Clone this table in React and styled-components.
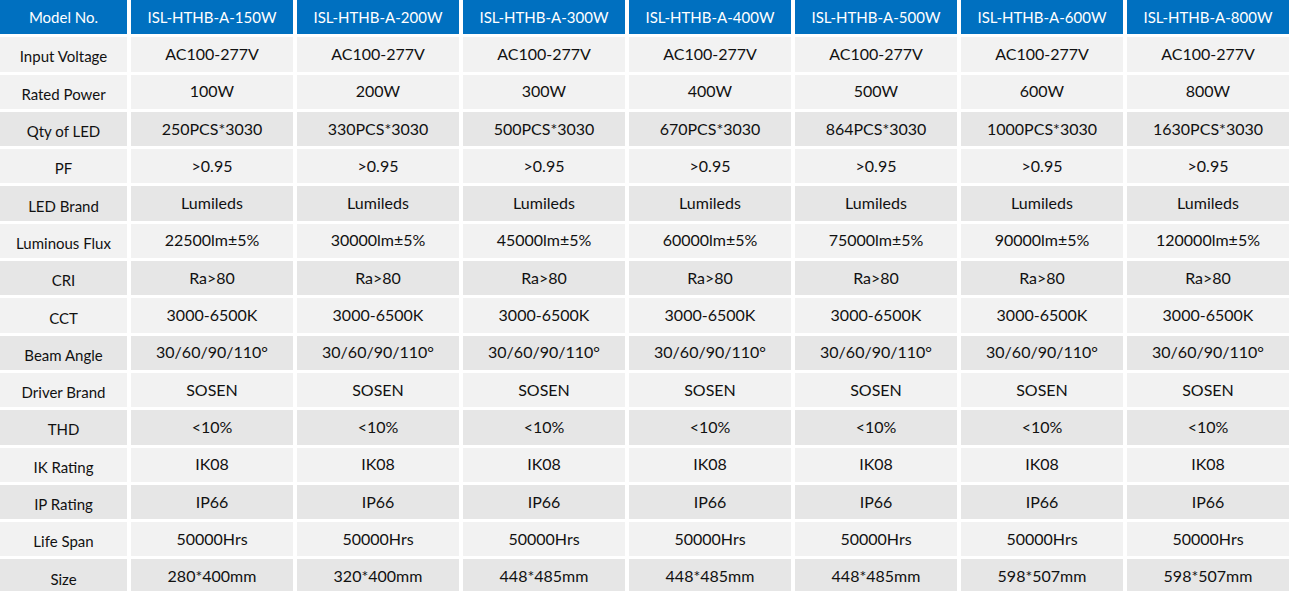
import styled, { createGlobalStyle } from 'styled-components';

const GlobalStyle = createGlobalStyle`
  html, body {
    margin: 0;
    padding: 0;
    background: #ffffff;
  }
  body {
    font-family: Lato, "Liberation Sans", sans-serif;
    overflow: hidden;
  }
`;

const models = ['150W', '200W', '300W', '400W', '500W', '600W', '800W'];

const specs = [
  { label: 'Input Voltage', values: Array(7).fill('AC100-277V') },
  { label: 'Rated Power', values: ['100W', '200W', '300W', '400W', '500W', '600W', '800W'] },
  {
    label: 'Qty of LED',
    values: ['250PCS*3030', '330PCS*3030', '500PCS*3030', '670PCS*3030', '864PCS*3030', '1000PCS*3030', '1630PCS*3030'],
  },
  { label: 'PF', values: Array(7).fill('>0.95') },
  { label: 'LED Brand', values: Array(7).fill('Lumileds') },
  {
    label: 'Luminous Flux',
    values: ['22500lm±5%', '30000lm±5%', '45000lm±5%', '60000lm±5%', '75000lm±5%', '90000lm±5%', '120000lm±5%'],
  },
  { label: 'CRI', values: Array(7).fill('Ra>80') },
  { label: 'CCT', values: Array(7).fill('3000-6500K') },
  { label: 'Beam Angle', values: Array(7).fill('30/60/90/110°') },
  { label: 'Driver Brand', values: Array(7).fill('SOSEN') },
  { label: 'THD', values: Array(7).fill('<10%') },
  { label: 'IK Rating', values: Array(7).fill('IK08') },
  { label: 'IP Rating', values: Array(7).fill('IP66') },
  { label: 'Life Span', values: Array(7).fill('50000Hrs') },
  {
    label: 'Size',
    values: ['280*400mm', '320*400mm', '448*485mm', '448*485mm', '448*485mm', '598*507mm', '598*507mm'],
  },
];

const Table = styled.div`
  display: grid;
  grid-template-columns: 127px repeat(7, 1fr);
  grid-auto-rows: 34.3px;
  column-gap: 4px;
  row-gap: 3px;
  width: 1289px;
`;

const HeaderCell = styled.div`
  display: flex;
  align-items: center;
  justify-content: center;
  background: #0070c0;
  color: #ffffff;
  font-size: 15px;
  padding-bottom: 1px;
`;

const Cell = styled.div`
  display: flex;
  align-items: center;
  justify-content: center;
  background: ${p => (p.$dark ? '#e6e6e6' : '#f2f2f2')};
  color: #111111;
`;

const LabelCell = styled(Cell)`
  font-size: 15px;
  padding-top: 4px;
`;

const ValueCell = styled(Cell)`
  font-size: 16px;
  padding-bottom: 2px;
`;

export default function App() {
  return (
    <>
      <GlobalStyle />
      <Table>
        <HeaderCell>Model No.</HeaderCell>
        {models.map(m => (
          <HeaderCell key={m}>ISL-HTHB-A-{m}</HeaderCell>
        ))}
        {specs.map((row, i) => {
          const dark = i >= 2 && i % 2 === 0;
          return [
            <LabelCell key={row.label} $dark={dark}>
              {row.label}
            </LabelCell>,
            ...row.values.map((v, j) => (
              <ValueCell key={row.label + j} $dark={dark}>
                {v}
              </ValueCell>
            )),
          ];
        })}
      </Table>
    </>
  );
}
